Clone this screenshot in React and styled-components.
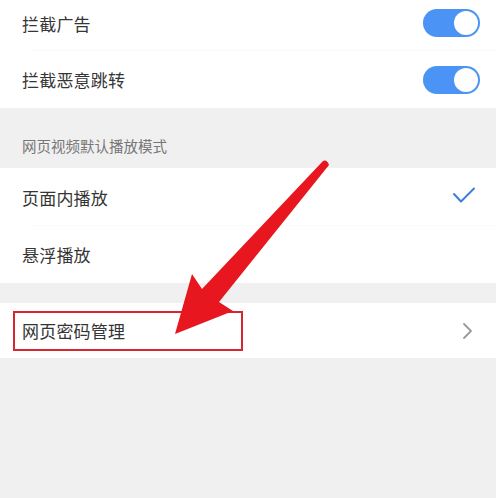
import React from "react";
import styled, { createGlobalStyle } from "styled-components";

const GlobalStyle = createGlobalStyle`
  html, body {
    margin: 0;
    padding: 0;
    background: #f0f0f1;
  }
  body {
    font-family: "Noto Sans CJK SC", "Noto Sans", sans-serif;
  }
`;

const Page = styled.div`
  position: relative;
  width: 496px;
  height: 498px;
  overflow: hidden;
  background: #f0f0f1;
`;

const Section = styled.div`
  background: #ffffff;
  margin-top: ${(p) => p.$offset || 0}px;
`;

const Row = styled.div`
  display: flex;
  align-items: center;
  justify-content: space-between;
  height: ${(p) => p.$h || 57}px;
  padding: 0 16px 0 22px;
  position: relative;
  box-sizing: border-box;
  &:not(:last-child)::after {
    content: "";
    position: absolute;
    left: 30px;
    right: 0;
    bottom: 0;
    height: 1px;
    background: #fafafa;
  }
`;

const Label = styled.span`
  font-size: 17px;
  color: #353535;
  letter-spacing: 0.2px;
`;

const GroupTitle = styled.div`
  height: 60px;
  box-sizing: border-box;
  padding: 27px 0 0 22px;
  font-size: 14.5px;
  color: #777777;
`;

const Gap = styled.div`
  height: 20px;
`;

const Switch = styled.div`
  width: 57px;
  height: 28px;
  border-radius: 14px;
  background: #4b93f4;
  display: flex;
  align-items: center;
  justify-content: flex-end;
  padding: 0 2px;
  box-sizing: border-box;
  &::after {
    content: "";
    width: 24px;
    height: 24px;
    border-radius: 50%;
    background: #ffffff;
  }
`;

const Marker = styled.div`
  position: absolute;
  left: 13px;
  top: 311px;
  width: 230px;
  height: 40px;
  box-sizing: border-box;
  border: 2px solid #d8262e;
`;

const Arrow = styled.svg`
  position: absolute;
  left: 0;
  top: 0;
  pointer-events: none;
`;

const Check = () => (
  <svg width="24" height="20" viewBox="0 0 24 20" style={{ marginRight: 4 }}>
    <path
      d="M2 7 L9 14.5 L22 1.5"
      fill="none"
      stroke="#3b7fd6"
      strokeWidth="2"
      strokeLinecap="round"
      strokeLinejoin="round"
    />
  </svg>
);

const Chevron = () => (
  <svg width="12" height="18" viewBox="0 0 12 18" style={{ marginRight: 6 }}>
    <path
      d="M2 2 L9 9 L2 16"
      fill="none"
      stroke="#9a9a9a"
      strokeWidth="1.8"
      strokeLinecap="round"
      strokeLinejoin="round"
    />
  </svg>
);

export default function App() {
  return (
    <Page>
      <GlobalStyle />
      <Section $offset={-5}>
        <Row $h={56}>
          <Label>拦截广告</Label>
          <Switch />
        </Row>
        <Row $h={57}>
          <Label>拦截恶意跳转</Label>
          <Switch />
        </Row>
      </Section>
      <GroupTitle>网页视频默认播放模式</GroupTitle>
      <Section>
        <Row $h={58}>
          <Label>页面内播放</Label>
          <Check />
        </Row>
        <Row $h={57}>
          <Label>悬浮播放</Label>
        </Row>
      </Section>
      <Gap />
      <Section>
        <Row $h={55}>
          <Label>网页密码管理</Label>
          <Chevron />
        </Row>
      </Section>
      <Marker />
      <Arrow width="496" height="498" viewBox="0 0 496 498">
        <path
          d="M323 161 Q327 159 329 165 L219 302 L233 311 L175 334 L192 274 L202 289 Z"
          fill="#e8161e"
        />
      </Arrow>
    </Page>
  );
}
